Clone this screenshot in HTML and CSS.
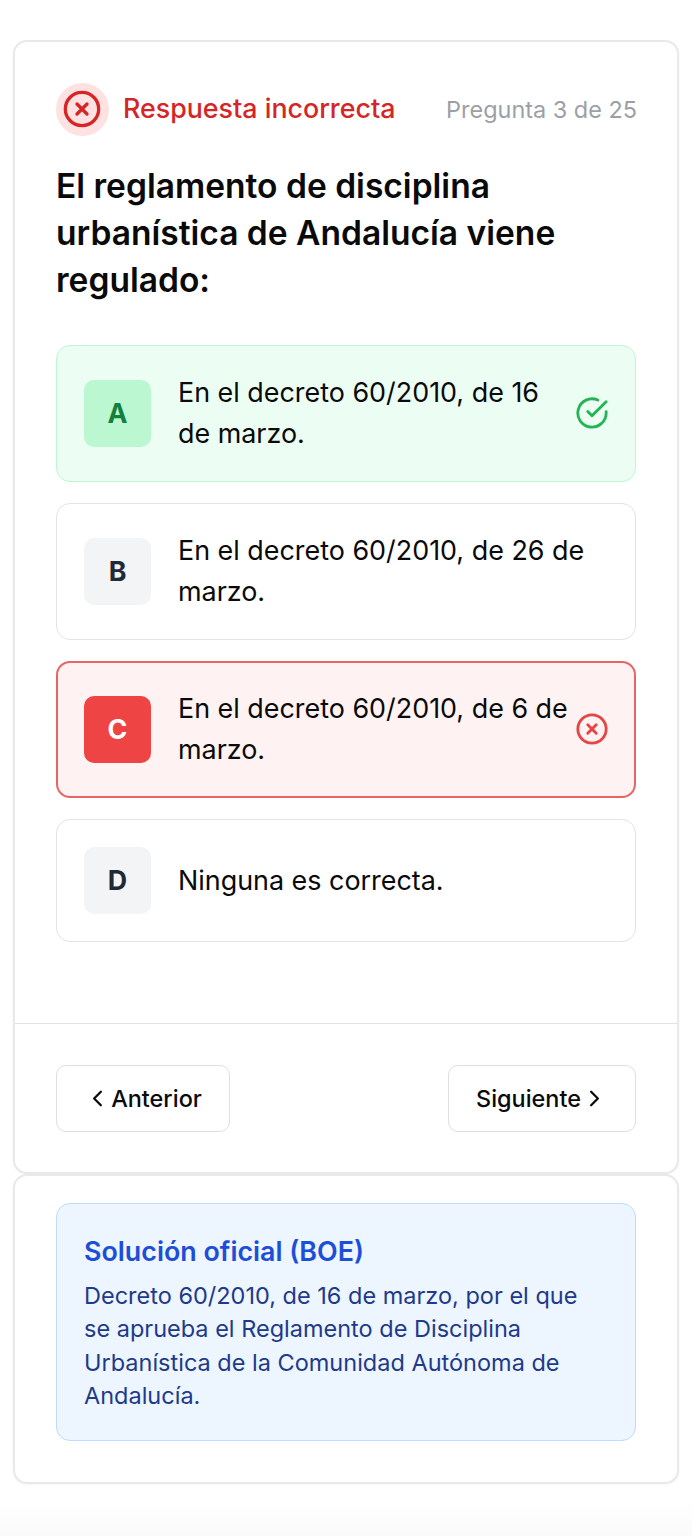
FILE: index.html
```html
<!DOCTYPE html>
<html lang="es">
<head>
<meta charset="utf-8">
<title>Pregunta 3 de 25</title>
<link rel="stylesheet" href="styles.css">
</head>
<body>
<main class="page">
  <section class="card quiz">
    <div class="quiz-body">
      <header class="status">
        <span class="status-badge">
          <svg class="icon" viewBox="0 0 24 24"><circle cx="12" cy="12" r="10"/><path d="m15 9-6 6M9 9l6 6"/></svg>
        </span>
        <span class="status-text">Respuesta incorrecta</span>
        <span class="counter">Pregunta 3 de 25</span>
      </header>
      <h1 class="question">El reglamento de disciplina<br>urbanística de Andalucía viene<br>regulado:</h1>
      <div class="options">
        <div class="option correct">
          <span class="letter">A</span>
          <span class="answer">En el decreto 60/2010, de 16<br>de marzo.</span>
          <svg class="icon mark" viewBox="0 0 24 24"><path d="M22 11.08V12a10 10 0 1 1-5.93-9.14"/><path d="m22 4-10 10.01-3-3"/></svg>
        </div>
        <div class="option">
          <span class="letter">B</span>
          <span class="answer">En el decreto 60/2010, de 26 de<br>marzo.</span>
        </div>
        <div class="option wrong">
          <span class="letter">C</span>
          <span class="answer">En el decreto 60/2010, de 6 de<br>marzo.</span>
          <svg class="icon mark" viewBox="0 0 24 24"><circle cx="12" cy="12" r="10"/><path d="m15 9-6 6M9 9l6 6"/></svg>
        </div>
        <div class="option single">
          <span class="letter">D</span>
          <span class="answer">Ninguna es correcta.</span>
        </div>
      </div>
    </div>
    <footer class="nav">
      <button class="button previous"><svg class="icon chevron" viewBox="0 0 24 24"><path d="m15 18-6-6 6-6"/></svg>Anterior</button>
      <button class="button next">Siguiente<svg class="icon chevron" viewBox="0 0 24 24"><path d="m9 18 6-6-6-6"/></svg></button>
    </footer>
  </section>
  <section class="card solution">
    <div class="note">
      <h2 class="note-title">Solución oficial (BOE)</h2>
      <p class="note-text">Decreto 60/2010, de 16 de marzo, por el que<br>se aprueba el Reglamento de Disciplina<br>Urbanística de la Comunidad Autónoma de<br>Andalucía.</p>
    </div>
  </section>
</main>
</body>
</html>
```
FILE: styles.css
```css
* { box-sizing: border-box; }

body {
  margin: 0;
  background: #fff;
  color: #0a0a0a;
  font-family: Inter, "Liberation Sans", sans-serif;
  white-space: nowrap;
}

.page {
  height: 1536px;
  padding: 40px 13px 0;
  background: linear-gradient(#fff 1500px, #fafafa 1536px);
}

.card {
  border: 2px solid #e9e9ea;
  border-radius: 14px;
  background: #fff;
  box-shadow: 0 1px 3px rgb(0 0 0 / 4%);
}

.quiz {
  display: flex;
  flex-direction: column;
  height: 1134px;
}

.quiz-body {
  flex: 1;
  padding: 40px 41px 0;
}

.icon {
  display: block;
  flex: none;
  fill: none;
  stroke: currentColor;
  stroke-width: 2;
  stroke-linecap: round;
  stroke-linejoin: round;
}

.status {
  display: flex;
  align-items: center;
  height: 54px;
  margin-right: -1px;
}

.status-badge {
  display: flex;
  align-items: center;
  width: 53px;
  height: 53px;
  margin-right: 14px;
  padding-left: 6px;
  border-radius: 50%;
  background: #fee2e2;
  color: #d42626;
}

.status-badge .icon { width: 40px; height: 40px; }

.status-text {
  padding-bottom: 2px;
  color: #d42626;
  font-size: 26.8px;
  font-weight: 500;
}

.counter {
  margin-left: auto;
  color: #9ca0a6;
  font-size: 23.45px;
}

.question {
  margin: 26px 0 0;
  font-size: 33.55px;
  font-weight: 600;
  line-height: 47px;
}

.options {
  display: grid;
  gap: 21px;
  margin-top: 42px;
}

.option {
  display: flex;
  align-items: center;
  height: 137px;
  padding: 0 27px;
  border: 1px solid #e2e3e6;
  border-radius: 14px;
}

.single { height: 123px; }

.letter {
  display: grid;
  place-items: center;
  flex: none;
  width: 67px;
  height: 67px;
  margin-right: 27px;
  padding-bottom: 2px;
  border-radius: 10px;
  background: #f3f4f6;
  color: #1f2937;
  font-size: 26.8px;
  font-weight: 700;
}

.answer {
  padding-bottom: 2px;
  font-size: 26.9px;
  line-height: 41px;
}

.single .answer { padding-bottom: 0; }

.mark {
  width: 34px;
  height: 34px;
  margin: 0 -0.5px 1px auto;
}

.correct { border-color: #bbf7d0; background: #ecfef3; }
.correct .letter { background: #bbf7d0; color: #15803d; }
.correct .mark { color: #22b455; }

.wrong { padding: 0 26px; border: 2px solid #e96565; background: #fef2f2; }
.wrong .letter { background: #ef4444; color: #fff; }
.wrong .mark { color: #e64545; }

.nav {
  display: flex;
  justify-content: space-between;
  height: 149px;
  padding: 41px 41px 0;
  border-top: 1px solid #e2e2e4;
}

.button {
  display: flex;
  align-items: center;
  justify-content: center;
  height: 67px;
  padding: 0;
  border: 1px solid #dfdfe1;
  border-radius: 10px;
  background: #fff;
  color: #0a0a0a;
  font: 500 23.45px Inter, "Liberation Sans", sans-serif;
}

.previous { width: 174px; }
.next { width: 188px; }
.chevron { width: 27px; height: 27px; }

.solution {
  height: 310px;
  padding: 27px 41px 0;
}

.note {
  height: 238px;
  padding: 29px 27px;
  border: 1px solid #bfdbfe;
  border-radius: 14px;
  background: #edf5ff;
}

.note-title {
  margin: 0;
  color: #1d4ed8;
  font-size: 26.85px;
  font-weight: 600;
  line-height: 36px;
}

.note-text {
  margin: 10px 0 0;
  color: #1e3a8a;
  font-size: 23.5px;
  line-height: 33.4px;
}
```
